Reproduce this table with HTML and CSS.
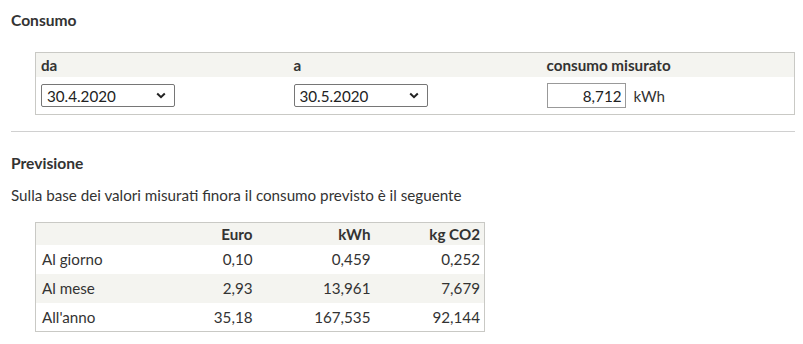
FILE: index.html
```html
<!DOCTYPE html>
<html lang="it">
<head>
<meta charset="utf-8">
<title>Consumo</title>
<link rel="stylesheet" href="styles.css">
</head>
<body>
<main class="page">
  <h2 class="title title-first">Consumo</h2>
  <table class="range">
    <thead>
      <tr><th>da</th><th>a</th><th>consumo misurato</th></tr>
    </thead>
    <tbody>
      <tr>
        <td>
          <span class="select-wrap">
            <select class="select"><option>30.4.2020</option></select>
            <svg class="chev" width="10" height="7" viewBox="0 0 10 7"><path d="M1.2 1.5 L5 5.2 L8.8 1.5" fill="none" stroke="#222" stroke-width="2"/></svg>
          </span>
        </td>
        <td>
          <span class="select-wrap">
            <select class="select"><option>30.5.2020</option></select>
            <svg class="chev" width="10" height="7" viewBox="0 0 10 7"><path d="M1.2 1.5 L5 5.2 L8.8 1.5" fill="none" stroke="#222" stroke-width="2"/></svg>
          </span>
        </td>
        <td>
          <span class="measure">
            <input class="num-input" type="text" value="8,712">
            <span class="unit">kWh</span>
          </span>
        </td>
      </tr>
    </tbody>
  </table>
  <hr class="rule">
  <h2 class="title">Previsione</h2>
  <p class="lead">Sulla base dei valori misurati finora il consumo previsto è il seguente</p>
  <table class="forecast">
    <colgroup>
      <col class="c-label"><col class="c-euro"><col class="c-kwh"><col class="c-co2">
    </colgroup>
    <thead>
      <tr><th></th><th>Euro</th><th>kWh</th><th>kg CO2</th></tr>
    </thead>
    <tbody>
      <tr><td>Al giorno</td><td>0,10</td><td>0,459</td><td>0,252</td></tr>
      <tr class="alt"><td>Al mese</td><td>2,93</td><td>13,961</td><td>7,679</td></tr>
      <tr><td>All'anno</td><td>35,18</td><td>167,535</td><td>92,144</td></tr>
    </tbody>
  </table>
</main>
</body>
</html>
```

FILE: styles.css
```css
html, body {
  margin: 0;
  padding: 0;
  background: #fff;
}
body {
  font-family: Lato, "Open Sans", "Liberation Sans", sans-serif;
  font-size: 15.2px;
  color: #333;
}
.page {
  padding: 0 8px 0 11px;
}
.title {
  font-size: 15.6px;
  font-weight: 700;
  line-height: 20px;
  margin: 21px 0 0;
  color: #333;
}
.title-first {
  margin-top: 10px;
}
.range {
  margin: 22px 0 0 24px;
  width: calc(100% - 24px);
  border-collapse: collapse;
  table-layout: fixed;
  border: 1px solid #c9c9c5;
}
.range th {
  background: #f4f4f0;
  text-align: left;
  font-weight: 700;
  height: 24px;
  padding: 0 5px;
  line-height: 20px;
  vertical-align: middle;
}
.range td {
  height: 37px;
  padding: 0 5px;
  vertical-align: middle;
}
.select-wrap {
  position: relative;
  display: inline-block;
}
.select {
  appearance: none;
  -webkit-appearance: none;
  width: 134px;
  height: 23px;
  box-sizing: border-box;
  border: 1px solid #767676;
  border-radius: 2px;
  background: #fff;
  font-family: inherit;
  font-size: 15.2px;
  color: #222;
  padding: 0 20px 0 5px;
  margin: 0;
  display: block;
}
.chev {
  position: absolute;
  right: 9px;
  top: 8px;
  pointer-events: none;
}
.measure {
  display: inline-flex;
  align-items: center;
  gap: 8px;
}
.num-input {
  width: 79px;
  height: 25px;
  box-sizing: border-box;
  border: 1px solid #999;
  border-radius: 0;
  text-align: right;
  font-family: inherit;
  font-size: 15.2px;
  color: #222;
  padding: 0 3px;
  margin: 0;
}
.rule {
  border: 0;
  border-top: 1px solid #d0d0d0;
  margin: 16px 0 0;
  height: 0;
}
.lead {
  margin: 12px 0 0;
  line-height: 20px;
}
.forecast {
  margin: 17px 0 0 24px;
  width: 449px;
  border-collapse: collapse;
  table-layout: fixed;
  border: 1px solid #c9c9c5;
}
.c-label { width: 110px; }
.c-euro { width: 111px; }
.c-kwh { width: 118px; }
.c-co2 { width: 110px; }
.forecast th,
.forecast td {
  box-sizing: border-box;
}
.forecast th {
  background: #f4f4f0;
  font-weight: 700;
  text-align: right;
  height: 22px;
  padding: 0 4px;
  line-height: 20px;
}
.forecast td {
  height: 29px;
  padding: 0 4px;
  text-align: right;
  line-height: 20px;
}
.forecast td:first-child {
  text-align: left;
  padding-left: 6px;
}
.forecast tr.alt td {
  background: #f4f4f0;
}
```
